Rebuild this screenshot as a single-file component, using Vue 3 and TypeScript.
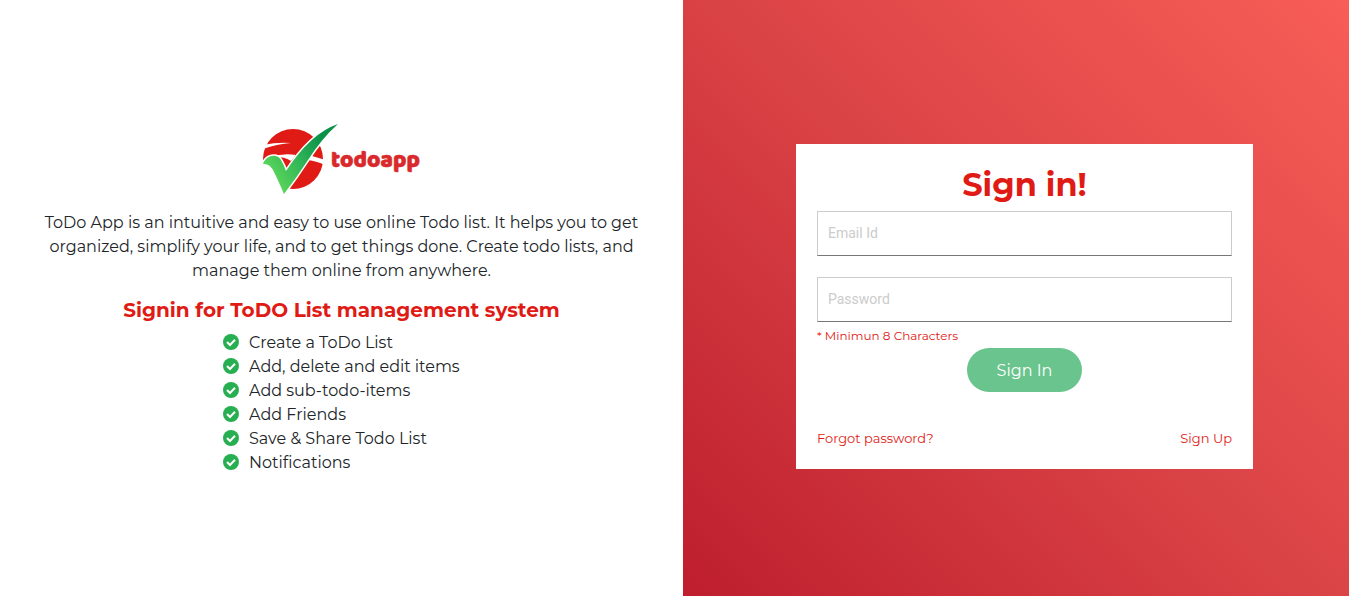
<script setup lang="ts">
import { ref } from 'vue'

const features: string[] = [
  'Create a ToDo List',
  'Add, delete and edit items',
  'Add sub-todo-items',
  'Add Friends',
  'Save & Share Todo List',
  'Notifications',
]
const email = ref('')
const password = ref('')
</script>

<template>
  <main class="page">
    <section class="intro">
      <svg class="logo" viewBox="0 0 158 72" role="img" aria-label="todoapp">
        <defs>
          <linearGradient id="tick" x1="0" y1="0.7" x2="1" y2="0.1">
            <stop offset="0.05" stop-color="#5bd65b" />
            <stop offset="0.45" stop-color="#2fb457" />
            <stop offset="0.8" stop-color="#0a9148" />
          </linearGradient>
          <clipPath id="disc"><circle cx="30" cy="36" r="30" /></clipPath>
        </defs>
        <g clip-path="url(#disc)" fill="#e01a14">
          <path d="M0 5 H62 V37 Q51 33 40 31 L36 36 Q52 37 62 42 V68 H20 L8 40 H0 V26 Q14 21 28 20 Q14 19 0 22 Z" />
        </g>
        <path d="M8 34 Q20 30 33 32 L28 38 Q20 33 8 34 Z" fill="#fff" />
        <path d="M0 41 C3 32 14 30 18 37 Q21 42 23 48 Q48 10 75 1 Q59 15 45 37 Q34 54 21 71 Q15 57 11 49 Q7 40 0 41 Z" fill="url(#tick)" stroke="#fff" stroke-width="3" paint-order="stroke" />
        <text class="wordmark" x="68" y="44">todoapp</text>
      </svg>
      <p class="summary">
        ToDo App is an intuitive and easy to use online Todo list. It helps you to get organized,
        simplify your life, and to get things done. Create todo lists, and manage them online from anywhere.
      </p>
      <h2 class="subtitle">Signin for ToDO List management system</h2>
      <ul class="features">
        <li v-for="feature in features" :key="feature">
          <svg class="check" viewBox="0 0 16 16" aria-hidden="true">
            <circle cx="8" cy="8" r="8" fill="#27ae51" />
            <path d="M4 8 L7 11 L12 5.8" fill="none" stroke="#fff" stroke-width="2" />
          </svg>
          <span>{{ feature }}</span>
        </li>
      </ul>
    </section>

    <section class="panel">
      <form class="card" @submit.prevent>
        <h1 class="title">Sign in!</h1>
        <input v-model="email" class="field" type="email" placeholder="Email Id" aria-label="Email Id" />
        <input v-model="password" class="field" type="password" placeholder="Password" aria-label="Password" aria-describedby="hint" />
        <p id="hint" class="hint">* Minimun 8 Characters</p>
        <button class="submit" type="submit">Sign In</button>
        <nav class="links">
          <a href="#">Forgot password?</a>
          <a href="#">Sign Up</a>
        </nav>
      </form>
    </section>
  </main>
</template>

<style>
body {
  margin: 0;
}
</style>

<style scoped>
.page {
  display: grid;
  grid-template-columns: 683fr 666fr;
  min-height: 100vh;
  font-family: Montserrat, Inter, sans-serif;
  font-size: 16px;
  line-height: 24px;
  color: #212529;
}
.intro {
  display: flex;
  flex-direction: column;
  align-items: center;
  justify-content: center;
  padding: 2px 40px 0;
}
.logo {
  width: 158px;
  height: 72px;
  margin-bottom: 16px;
}
.wordmark {
  font-family: "Baloo Bhai", "Baloo 2", Baloo, Montserrat, sans-serif;
  font-size: 23px;
  font-weight: 800;
  fill: #d9292c;
  stroke: #d9292c;
  stroke-width: 0.5;
}
.summary {
  max-width: 603px;
  margin: 0 0 15px;
  text-align: center;
}
.subtitle {
  margin: 0 0 9px;
  font-size: 20px;
  line-height: 24px;
  font-weight: 700;
  color: #e01a14;
}
.features {
  width: 237px;
  margin: 0;
  padding: 0;
  list-style: none;
}
.features li {
  display: flex;
  align-items: flex-start;
  gap: 10px;
  white-space: nowrap;
}
.check {
  flex: none;
  width: 16px;
  height: 16px;
  margin-top: 3px;
}
.panel {
  display: flex;
  align-items: center;
  justify-content: center;
  padding: 17px 0 0 17px;
  background: linear-gradient(45deg, #be1e2d, #da4346 50%, #f85d56);
}
.card {
  display: flex;
  flex-direction: column;
  box-sizing: border-box;
  width: 457px;
  max-width: 100%;
  padding: 21px;
  background: #fff;
}
.title {
  margin: 0 0 6px;
  font-size: 32px;
  line-height: 40px;
  font-weight: 700;
  text-align: center;
  color: #e01a14;
}
.field {
  box-sizing: border-box;
  width: 100%;
  height: 45px;
  padding: 0 10px 2px;
  border: 1px solid #ccc;
  border-bottom-color: #777;
  border-radius: 0;
  font-family: Roboto, sans-serif;
  font-size: 14px;
  color: #212529;
}
.field + .field {
  margin-top: 21px;
}
.field::placeholder {
  color: #ccc;
  opacity: 1;
}
.hint {
  margin: 4px 0 2px;
  font-size: 12px;
  line-height: 20px;
  color: #e01a14;
}
.submit {
  align-self: center;
  height: 44px;
  padding: 2px 30px 0;
  border: 0;
  border-radius: 22px;
  background: #69c48d;
  font: inherit;
  color: #fff;
}
.links {
  display: flex;
  justify-content: space-between;
  margin-top: 36px;
  font-size: 13px;
  line-height: 20px;
}
.links a {
  color: #e01a14;
  text-decoration: none;
}
</style>
